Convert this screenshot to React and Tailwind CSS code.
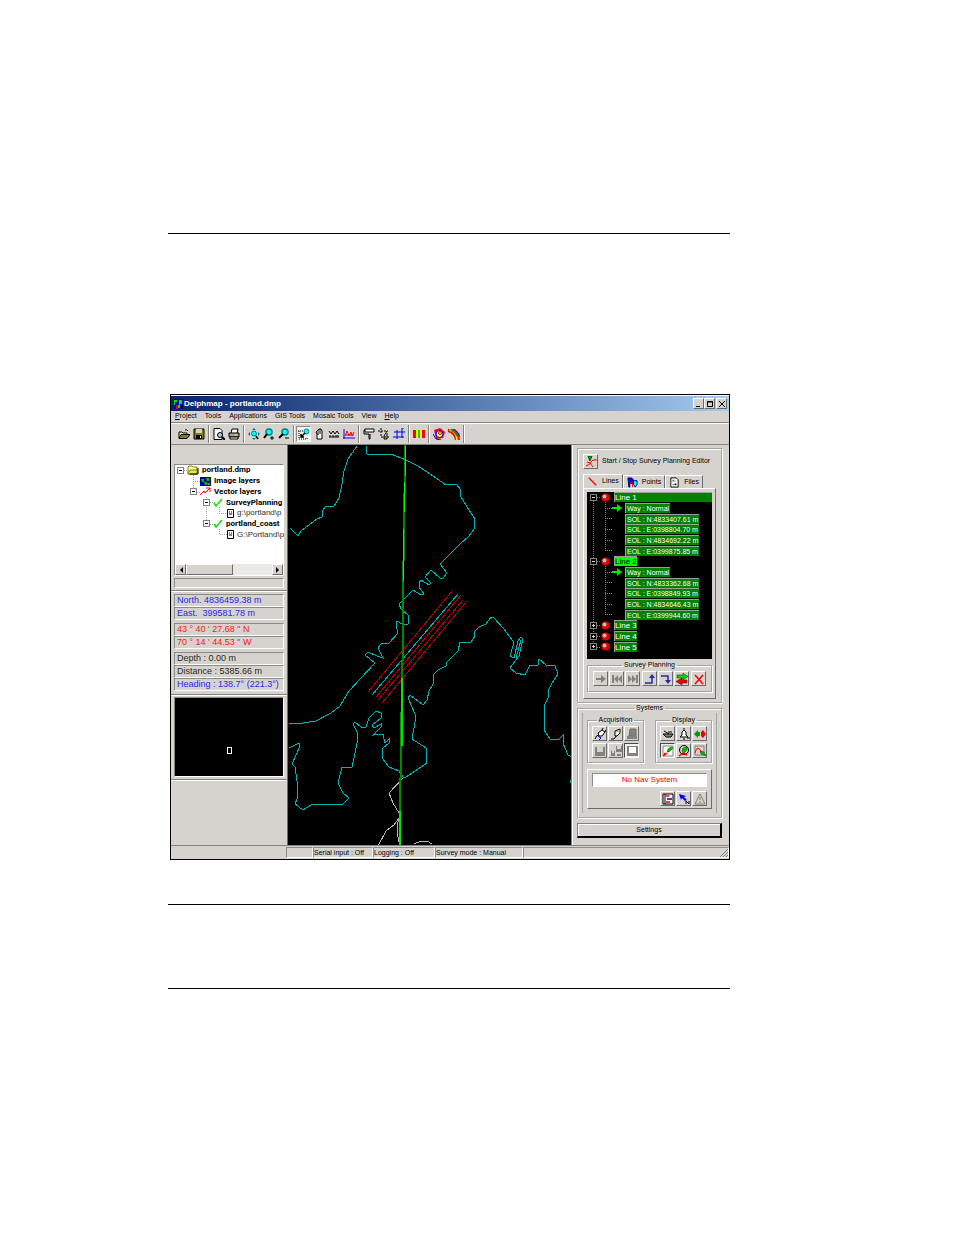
import React, { useState } from 'react';

const RAISED = "border border-t-white border-l-white border-r-[#6b6b6b] border-b-[#6b6b6b]";
const SUNKEN = "border border-t-[#8a8a86] border-l-[#8a8a86] border-r-white border-b-white";
const GROUP = "border border-[#a5a5a0] shadow-[1px_1px_0_#fff,inset_1px_1px_0_#fff]";

// Small bitmap-like icons, drawn on a 12 x 12 grid
const ICONS = {
  open: <><path d="M1 10V4h3l1 1h4v2" fill="#ffff80" stroke="#000" /><path d="M1 10.500l2-4h9l-3 4z" fill="#848200" stroke="#000" /><path d="M7 2q2-1 3 1" fill="none" stroke="#000" /></>,
  save: <><path d="M1 1h10v10H1z" fill="#848200" stroke="#000" /><path d="M3 1h6v4H3z" fill="#d6d3ce" /><path d="M3 7h6v4H3z" fill="#000" /><path d="M7 8h1v2H7z" fill="#fff" /></>,
  preview: <><path d="M1 0.500h6l2 2v9H1z" fill="#fff" stroke="#000" /><circle cx="7" cy="7" r="2.500" fill="#b5ced6" stroke="#000" /><path d="M9 9l3 3" stroke="#000" strokeWidth="2" /></>,
  print: <><path d="M3 5l1-4h6L9 5" fill="#fff" stroke="#000" /><path d="M1 5h10v4H1z" fill="#a5a5a0" stroke="#000" /><path d="M2 9h8v2H2z" fill="#fff" stroke="#000" /><path d="M7 7h2" stroke="#ff0" /></>,
  pan: <><path d="M6 0l2 2H4zM6 12l2-2H4zM0 6l2-2v4zM12 6l-2-2v4z" fill="#008284" /><circle cx="6" cy="5.500" r="2.500" fill="#0ff" stroke="#008284" /><path d="M8 8l2 3" stroke="#000" strokeWidth="1.500" /></>,
  zoomIn: <><circle cx="6" cy="4" r="3" fill="#0ff" stroke="#008284" strokeWidth="1.500" /><path d="M4 6l-3 4" stroke="#000" strokeWidth="2" /><path d="M7 10h4M9 8v4" stroke="#000" /></>,
  zoomOut: <><circle cx="7" cy="4" r="3" fill="#0ff" stroke="#008284" strokeWidth="1.500" /><path d="M5 6l-4 4" stroke="#000" strokeWidth="2" /><path d="M7 10h4" stroke="#000" /></>,
  zoomArea: <><path d="M0 3h6M1 3v8h8V9" stroke="#000" strokeDasharray="1 1" fill="none" /><circle cx="8.500" cy="3.500" r="2.500" fill="#0ff" stroke="#008284" /><path d="M7 5l-4 4M3 6v3h3" stroke="#000" strokeWidth="1.500" fill="none" /></>,
  hand: <><path d="M4 11V6L3 4l2-2 1-1h2l1 2v8z" fill="#fff" stroke="#000" /><path d="M5 2v5M7 1v5" stroke="#000" /></>,
  measure: <><path d="M1 3l2 3 2-3 2 3 2-3 2 3" fill="none" stroke="#000" /><path d="M1 9h10M2 7v2M5 7v2M8 7v2M10 7v2" stroke="#000" /></>,
  profile: <><path d="M1 1v10M0 10h12" stroke="#0000ff" /><path d="M2 8l2-5 2 5 2-4 1 4 2-4" fill="none" stroke="#ff0000" /><path d="M2 7h9" stroke="#ff0000" /></>,
  roller: <><path d="M2 1h9v3H2z" fill="#fff" stroke="#000" /><path d="M2 2H1v4h5v5h1V6" fill="none" stroke="#000" /></>,
  crop: <><path d="M3 0v9h9M0 3h10" fill="none" stroke="#000" strokeDasharray="2 1" /><path d="M9 3L6 8v3h3V5" fill="none" stroke="#000" /></>,
  grid: <><path d="M4 2v9M9 0v10M1 4h11M0 9h11" stroke="#0000ff" /><path d="M8 3l3-3" stroke="#008284" /></>,
  palette: <><path d="M0 2h3v8H0z" fill="#f00" /><path d="M3 2h2v8H3z" fill="#ff0" /><path d="M5 2h2v8H5z" fill="#0d0" /><path d="M7 2h2v8H7z" fill="#ff0" /><path d="M9 2h3v8H9z" fill="#f00" /></>,
  target: <><path d="M1 2l6-2 5 4-2 6-7 1z" fill="#f00" /><circle cx="6.500" cy="6" r="3.500" fill="#ff0" stroke="#00f" /><circle cx="7" cy="5" r="1.500" fill="#ff0" stroke="#f00" /><path d="M0 6l3 5 5 1" stroke="#00f" fill="none" /></>,
  track: <><path d="M0 1h6q5 3 6 11H7Q6 6 0 4z" fill="#f00" /><path d="M1 2q7 1 8 10" stroke="#ff0" strokeWidth="1.500" fill="none" /><path d="M3 2q4 1 6 6" stroke="#090" strokeWidth="2" fill="none" /><path d="M6 1q5 3 6 8" stroke="#00f" fill="none" /></>,
  planning: <><path d="M1 10q4-1 5-4t6-2" fill="none" stroke="#f00" /><path d="M2 6l3 1 3 4" fill="none" stroke="#f00" /><path d="M3 0h4L5 5z" fill="#0a0" stroke="#050" /></>,
  line: <path d="M2 2l8 8" stroke="#f00" strokeWidth="1.500" />,
  points: <><path d="M1 1h4l2 2v4H4V5H3v6H2z" fill="#00f" stroke="#006" /><path d="M3 5l3 1v5" stroke="#f00" fill="none" /><path d="M7 4h4v4l-2 3-2-3z" fill="#0ff" stroke="#006" /></>,
  files: <><path d="M2 1h6l2 2v8H2z" fill="#fff" stroke="#000" /><path d="M4 3h1v2H4zM6 4h1v1H6zM4 8h1v1H4zM6 7h2v2H6z" fill="#000" /></>,
  next: <path d="M1 5h5V2l5 4-5 4V7H1z" fill="#84827b" />,
  rewind: <path d="M1 2h2v8H1zM3 6l4-4v8zM7 6l4-4v8z" fill="#84827b" />,
  forward: <path d="M9 2h2v8H9zM1 2l4 4-4 4zM5 2l4 4-4 4z" fill="#84827b" />,
  up: <><path d="M1 10h7V4" fill="none" stroke="#2929a5" strokeWidth="1.500" /><path d="M5 5l3-4 3 4z" fill="#2929a5" /></>,
  down: <><path d="M1 3h7v5" fill="none" stroke="#2929a5" strokeWidth="1.500" /><path d="M5 7l3 4 3-4z" fill="#2929a5" /></>,
  swap: <><path d="M1 2h6V0l5 3.500L7 7V5H1z" fill="#0d0" stroke="#030" strokeWidth="0.500" /><path d="M11 7H6V5L0 8.500 6 12v-2h5z" fill="#f00" stroke="#300" strokeWidth="0.500" /></>,
  remove: <path d="M2 2l8 9M10 2l-8 9" stroke="#f00" strokeWidth="1.500" />,
  plug: <><path d="M1 11q1-4 4-4" fill="none" stroke="#000" /><path d="M4 5l4-3 3 2-3 4H5z" fill="#fff" stroke="#000" /><path d="M8 2l1-2M11 4l1-2" stroke="#000" /><path d="M4 8l3 2-2 2" fill="none" stroke="#00a" /></>,
  unplug: <><path d="M1 11h3l3-4" fill="none" stroke="#000" /><path d="M5 3l5-2v4L7 8H5z" fill="#fff" stroke="#000" /><path d="M6 4l3-1" stroke="#aa0" /></>,
  station: <><path d="M4 1h6v7H3z" fill="#84827b" stroke="#6b6b66" /><path d="M1 8h10v3H1z" fill="#84827b" /></>,
  disk: <><path d="M1 2h10v9H1z" fill="#84827b" /><path d="M3 2h6v5H3z" fill="#d6d3ce" /></>,
  disks: <><path d="M6 1h6v6H6zM1 6h4v5H1z" fill="#84827b" /><path d="M7 1h4v3H7zM2 6h2v2H2z" fill="#d6d3ce" /><path d="M7 9h4v2H7z" fill="#84827b" /></>,
  diskOn: <><path d="M1 1h11v10H1z" fill="#84827b" /><path d="M3 2h7v6H3z" fill="#fff" /></>,
  boat: <><path d="M1 6h10l-2 3H4z" fill="#84827b" stroke="#000" /><path d="M2 3l5 3M6 4h4" stroke="#000" /></>,
  bell: <><path d="M2 9h8L8 7V4L6 2 4 4v3z" fill="#fff" stroke="#000" /><path d="M6 0v2M5 11h2M9 10h3" stroke="#000" /></>,
  sides: <><path d="M0 6l4-4v2h2v4H4v2z" fill="#090" /><path d="M12 6L9 2 7 4v4l2 2z" fill="#e00" /></>,
  mapBoat: <><path d="M1 1h10v10H1z" fill="#fff" stroke="#84827b" /><path d="M1 11l4-3M2 8l2 2" stroke="#f00" strokeWidth="1.500" /><path d="M5 7l1-3 3-2 2 1-4 4z" fill="#0b0" stroke="#040" strokeWidth="0.500" /></>,
  follow: <><circle cx="6" cy="5" r="4.500" fill="none" stroke="#000" /><path d="M4 6l1-3 4-1v3L6 8z" fill="#0b0" stroke="#040" strokeWidth="0.500" /><path d="M1 11l4-3 4 2" fill="none" stroke="#f00" strokeWidth="1.500" /></>,
  route: <><path d="M1 1h9v9H1z" fill="none" stroke="#84827b" /><path d="M1 8q2-7 4-4l3 3" fill="none" stroke="#f00" /><path d="M6 6l4 1 2 4-5-2z" fill="#0b0" stroke="#040" strokeWidth="0.500" /></>,
  report: <><path d="M1 1h10v10H1z" fill="#fff" stroke="#000" /><path d="M3 1v10" stroke="#000" /><path d="M4 3h3M4 9h4" stroke="#f00" strokeWidth="1.500" /><path d="M5 6h5" stroke="#00a" strokeWidth="1.500" /></>,
  pointer: <><path d="M1 1l7 2-2 1 3 3-2 1-3-3-1 2z" fill="#00f" /><path d="M8 11V8l3 3V8" fill="none" stroke="#000" /></>,
  warning: <><path d="M6 1l5 10H1z" fill="#d6d3ce" stroke="#84827b" /><path d="M6 4v3M6 8v2" stroke="#84827b" /></>,
};

function Icon({ name, className = "size-3" }) {
  return (
    <svg viewBox="0 0 12 12" className={`shrink-0 ${className}`} fill="none" aria-hidden="true">
      {ICONS[name]}
    </svg>
  );
}

const TOOLBAR = [
  [["open", "Open"], ["save", "Save"]],
  [["preview", "Print preview"], ["print", "Print"]],
  [["pan", "Zoom extents"], ["zoomIn", "Zoom in"], ["zoomOut", "Zoom out"]],
  [["zoomArea", "Zoom area"], ["hand", "Pan"], ["measure", "Measure"], ["profile", "Profile"]],
  [["roller", "Paint"], ["crop", "Crop"], ["grid", "Grid"]],
  [["palette", "Palette"]],
  [["target", "Target"], ["track", "Track"]],
];

const MENUS = ["Project", "Tools", "Applications", "GIS Tools", "Mosaic Tools", "View", "Help"];
const UNDERLINED = ["Project", "Help"];

const PLAN = [
  { type: "line", label: "Line 1", open: true, row: "grow bg-[#008200] text-white" },
  { type: "way", label: "Way : Normal" },
  { type: "pos", label: "SOL : N:4833407.61 m" },
  { type: "pos", label: "SOL : E:0398804.70 m" },
  { type: "pos", label: "EOL : N:4834692.22 m" },
  { type: "pos", label: "EOL : E:0399875.85 m" },
  { type: "line", label: "Line 2", open: true, row: "bg-[#00ff00] text-black" },
  { type: "way", label: "Way : Normal" },
  { type: "pos", label: "SOL : N:4833362.68 m" },
  { type: "pos", label: "SOL : E:0398849.93 m" },
  { type: "pos", label: "EOL : N:4834646.43 m" },
  { type: "pos", label: "EOL : E:0399944.60 m" },
  { type: "line", label: "Line 3", row: "bg-[#008200] text-white" },
  { type: "line", label: "Line 4", row: "bg-[#008200] text-white" },
  { type: "line", label: "Line 5", row: "bg-[#008200] text-white" },
];

const COAST = [
  "M68 0L59 13L55 25L53 38L50 52L45 60H37L34 64L33 71L28 73L20 79L12 85L9 90L1 82",
  "M77 0L78 8H102L117 14L129 20L147 32L157 39L167 38L172 44L171 49L178 61L186 73L185 83L180 90L170 99L151 118L158 127L154 132H151L142 124L136 131L142 137L140 139L132 134L130 137V141L135 148L132 149L124 144L110 158L112 163L120 170L119 178H113L108 175L107 178L109 187L100 197L92 198L89 202L94 212L88 210L79 206L76 209L86 217L72 232L60 245L51 260L42 267L27 275L14 277L0 278",
  "M0 302L10 297L11 300L3 318L6 321L8 335V353L6 358L14 364L22 359L34 358H54L60 352L54 347L49 337L53 321H63L66 307L69 292L68 286L64 278L66 276L72 281H77L80 272L87 265L92 267V272L83 279L85 282L92 278V281L84 289L94 288L96 297L100 293V297L93 303V312L100 321L110 325L114 331H117L138 317L137 302L123 293L126 276V268L119 252L121 249L134 259L138 254L140 245L144 238L145 228L149 224L157 220V217L169 205L171 196H182L186 190L185 186L190 181L197 178L202 171L205 172L214 182L224 195V200L221 210L225 212L229 195L232 191L234 193L230 210L221 222L227 227L236 229L241 219H249L250 213L257 219L266 220L269 228L263 237L260 243L259 252L255 260V284L261 293L269 294L274 289V297L279 309L283 311",
  "M227 212L232 194M283 333L281 336L283 338",
];

function Win({ label, children }) {
  return (
    <button aria-label={label} className={`flex h-[11px] w-[11px] items-center justify-center bg-[#d6d3ce] ${RAISED}`}>
      <svg viewBox="0 0 8 8" className="size-2 shrink-0" fill="none" stroke="#000">{children}</svg>
    </button>
  );
}

function ToolButton({ name, label, pressed }) {
  return (
    <button
      aria-label={label}
      className={`flex size-[15px] shrink-0 items-center justify-center ${pressed ? "border border-t-[#4a4a4a] border-r-white border-b-white border-l-[#4a4a4a] bg-[#efefec]" : `bg-[#d6d3ce] ${RAISED}`}`}
    >
      <Icon name={name} />
    </button>
  );
}

function Expander({ open, dark }) {
  return (
    <svg viewBox="0 0 7 7" className="size-[7px] shrink-0" fill={dark ? "#000" : "#fff"} stroke="#84827b" shapeRendering="crispEdges">
      <path d="M0.500 0.500h6v6h-6z" />
      <path d={open ? "M2 3.500h3" : "M2 3.500h3M3.500 2v3"} stroke={dark ? "#d6d3ce" : "#000"} />
    </svg>
  );
}

function Check() {
  return (
    <svg viewBox="0 0 10 9" className="mx-[3px] h-[9px] w-[10px] shrink-0" fill="none" stroke="#00e700" strokeWidth="1.500">
      <path d="M1 5l2 3 6-7" />
    </svg>
  );
}

function LayerFile() {
  return (
    <svg viewBox="0 0 7 9" className="mr-[3px] h-[9px] w-[7px] shrink-0" fill="#fff" stroke="#000">
      <path d="M0.500 0.500h6v8h-6zM2 3h1M4 3h1M2 5h3" />
    </svg>
  );
}

function LayerTree() {
  return (
    <div className="relative h-[75px] font-[Roboto,'Liberation_Sans',sans-serif] text-[8px] leading-[10px] whitespace-nowrap text-black">
      <svg viewBox="0 0 108 75" className="absolute top-0 left-0 h-[75px] w-[108px]" fill="none" stroke="#a5a5a0" strokeDasharray="1 1" shapeRendering="crispEdges">
        <path d="M5 5.500H14M18.500 10V27M18 16.500H26M18 27.500H26M31.500 32V59M31 37.500H40M31 59.500H40M44.500 42V48.500H52M44.500 64V69.500H52" />
      </svg>
      <ul className="relative flex h-full flex-col">
        <li className="flex min-h-0 flex-1 items-center pl-[2px] font-bold">
          <Expander open />
          <svg viewBox="0 0 12 10" className="mx-[3px] h-[10px] w-3 shrink-0"><path d="M1 9V2l1-1h3l1 1h4v7z" fill="#ffff9c" stroke="#848200" /><path d="M3 5h8l-2 4H1z" fill="#e7e763" stroke="#848200" /><path d="M11 3v6H3" fill="none" stroke="#000" /></svg>
          portland.dmp
        </li>
        <li className="flex min-h-0 flex-1 items-center pl-[25px] font-bold">
          <svg viewBox="0 0 11 9" className="mr-[3px] h-[9px] w-[11px] shrink-0"><path d="M0 0h11v9H0z" fill="#0000a5" /><path d="M1 2h3v3H2zM6 1h3v3H7zM4 5h3v3H5zM8 6h2v2H8z" fill="#00c600" /></svg>
          Image layers
        </li>
        <li className="flex min-h-0 flex-1 items-center pl-[15px] font-bold">
          <Expander open />
          <svg viewBox="0 0 11 9" className="mx-[3px] h-[9px] w-[11px] shrink-0" fill="none" stroke="#f00"><path d="M0 8l4-4 1 2 5-5M6 1h4v4" /></svg>
          Vector layers
        </li>
        <li className="flex min-h-0 flex-1 items-center pl-[28px] font-bold">
          <Expander open />
          <Check />
          SurveyPlanning
        </li>
        <li className="flex min-h-0 flex-1 items-center pl-[52px] font-['Liberation_Sans',Arial,sans-serif] text-[#313131]">
          <LayerFile />
          g:\portland\p
        </li>
        <li className="flex min-h-0 flex-1 items-center pl-[28px] font-bold">
          <Expander open />
          <Check />
          portland_coast
        </li>
        <li className="flex min-h-0 flex-1 items-center pl-[52px] font-['Liberation_Sans',Arial,sans-serif] text-[#313131]">
          <LayerFile />
          G:\Portland\p
        </li>
      </ul>
    </div>
  );
}

function Readout({ color, children }) {
  return <p className={`h-[13px] pl-[2px] text-[9px] leading-[11px] whitespace-nowrap ${SUNKEN} ${color}`}>{children}</p>;
}

function LeftPanel() {
  return (
    <aside className="flex w-[116px] shrink-0 flex-col">
      <div className="px-[3px] pt-[19px]">
        <div className={`flex h-[112px] flex-col justify-between bg-white ${SUNKEN}`}>
          <LayerTree />
          <div className="flex h-[11px] bg-[#ebe9e6]">
            <button aria-label="Scroll left" className={`flex w-[11px] items-center justify-center bg-[#d6d3ce] ${RAISED}`}>
              <svg viewBox="0 0 4 6" className="h-[6px] w-1"><path d="M4 0v6L1 3z" /></svg>
            </button>
            <div className={`w-[47px] bg-[#d6d3ce] ${RAISED}`} />
            <button aria-label="Scroll right" className={`ml-auto flex w-[11px] items-center justify-center bg-[#d6d3ce] ${RAISED}`}>
              <svg viewBox="0 0 4 6" className="h-[6px] w-1"><path d="M0 0v6l3-3z" /></svg>
            </button>
          </div>
        </div>
        <div className={`mt-[2px] h-[10px] ${SUNKEN}`} />
      </div>
      <div className="mt-[2px] flex flex-col border-t border-[#84827b] px-[3px] pb-[3px] shadow-[inset_0_1px_0_#fff]">
        <div className="flex flex-col pt-[3px]">
          <Readout color="text-[#2929e7]">North. 4836459.38 m</Readout>
          <Readout color="text-[#2929e7]">East. &nbsp;399581.78 m</Readout>
        </div>
        <div className="flex flex-col pt-[3px]">
          <Readout color="text-[#f71818]">43 ° 40 ' 27.68 " N</Readout>
          <Readout color="text-[#f71818]">70 ° 14 ' 44.53 " W</Readout>
        </div>
        <div className="flex flex-col pt-[3px]">
          <Readout color="text-[#292929]">Depth : 0.00 m</Readout>
          <Readout color="text-[#292929]">Distance : 5385.66 m</Readout>
          <Readout color="text-[#2929e7]">Heading : 138.7° (221.3°)</Readout>
        </div>
      </div>
      <div className="border-y border-[#84827b] px-[3px] py-[2px] shadow-[0_1px_0_#fff,inset_0_1px_0_#fff]">
        <svg viewBox="0 0 108 78" className={`h-20 w-full bg-black ${SUNKEN}`} fill="none" stroke="#fff" shapeRendering="crispEdges">
          <path d="M52.500 49.500h4v6h-4z" />
        </svg>
      </div>
    </aside>
  );
}

function SurveyMap() {
  return (
    <svg viewBox="0 0 283 400" preserveAspectRatio="xMidYMid slice" className="h-full w-full" fill="none" shapeRendering="crispEdges" role="img" aria-label="Survey map">
      <g transform="translate(1 1)">
        <g stroke="#00b5b5">
          {COAST.map((d) => <path key={d} d={d} />)}
        </g>
        <path d="M114 332L100 347L104 357L110 367V372L105 379L97 385L89 400M110 372L108 380V387L111 400M125 398L132 395H138L143 398" stroke="#b5b5b5" />
        <path d="M164 144L79 246M172 149L87 251M174 154L89 254M178 155L93 257" stroke="#b50000" />
        <path d="M169 148L83 249" stroke="#00b5b5" />
      </g>
      <path d="M117 0L116 100L115 133V200L114 233L113 302L112 366V400" stroke="#008a00" strokeWidth="2" />
      <path d="M117.500 1V31M116.500 37V67M115.500 84V136" stroke="#00ff00" />
      <path d="M114 233V301M112 366V400" stroke="#00e700" strokeWidth="2" />
    </svg>
  );
}

function PlanTree() {
  return (
    <div className="relative bg-black pb-[7px] text-[7px] whitespace-nowrap">
      <svg viewBox="0 0 125 160" className="absolute top-0 left-0 h-40 w-[125px]" fill="none" stroke="#84827b" strokeDasharray="1 1" shapeRendering="crispEdges">
        <path d="M6.500 9V155M10 5.500H14M10 69.500H14M10 133.500H14M10 144.500H14M10 155.500H14M18.500 10V58.500M18 16.500H26M18 26.500H26M18 37.500H26M18 48.500H26M18 58.500H26M18.500 74V122.500M18 80.500H26M18 90.500H26M18 101.500H26M18 112.500H26M18 122.500H26" />
      </svg>
      <ul className="relative flex h-40 flex-col">
        {PLAN.map((item, i) => (
          <li key={i} className="flex min-h-0 flex-1 items-center leading-[9px]">
            {item.type === "line" ? (
              <>
                <span className="ml-[3px] flex"><Expander open={item.open} dark /></span>
                <svg viewBox="0 0 9 9" className="mx-1 size-[9px] shrink-0"><circle cx="4.500" cy="4.500" r="4" fill="#e70000" /><circle cx="3.500" cy="3.500" r="2" fill="#bdbdbd" /></svg>
                <span className={`border-t border-l border-[#9c9c9c] text-[8px] ${item.row}`}>{item.label}</span>
              </>
            ) : (
              <>
                <span className="flex w-[38px] shrink-0 justify-end pr-[3px]">
                  {item.type === "way" && <svg viewBox="0 0 10 8" className="h-2 w-[10px]"><path d="M0 3h5V0l5 4-5 4V5H0z" fill="#00e700" /></svg>}
                </span>
                <span className="border-t border-l border-[#9c9c9c] bg-[#008200] px-px text-white">{item.label}</span>
              </>
            )}
          </li>
        ))}
      </ul>
    </div>
  );
}

function Legend({ children }) {
  return <legend className="mx-auto px-[2px] text-[7px] leading-[10px]">{children}</legend>;
}

function RightPanel() {
  const [tab, setTab] = useState("Lines");

  return (
    <aside className="flex w-[158px] shrink-0 flex-col border-l border-[#84827b] pr-[7px] pl-[5px] shadow-[inset_1px_0_0_#fff]">
      <section className={`mt-[3px] flex h-[255px] flex-col px-[5px] pt-[5px] pb-[3px] ${GROUP}`}>
        <div className="flex items-center gap-[4px] text-[7px] whitespace-nowrap">
          <ToolButton name="planning" label="Survey planning editor" />
          <span>Start / Stop Survey Planning Editor</span>
        </div>
        <div className="mt-[5px] flex items-end text-[7px]" role="tablist">
          {[["Lines", "line"], ["Points", "points"], ["Files", "files"]].map(([name, icon]) => (
            <button
              key={name}
              role="tab"
              aria-selected={tab === name}
              onClick={() => setTab(name)}
              className={`flex items-center gap-[4px] border-t border-r border-l border-t-white border-r-[#6b6b6b] border-l-white px-[3px] ${tab === name ? "h-[14px]" : "h-[13px]"}`}
            >
              <Icon name={icon} className="size-[11px]" />
              {name}
            </button>
          ))}
        </div>
        <div className={`flex flex-1 flex-col px-[3px] pt-[3px] ${RAISED}`}>
          <PlanTree />
          <fieldset className={`mt-px h-[32px] px-[5px] ${GROUP}`}>
            <Legend>Survey Planning</Legend>
            <div className="flex justify-between pt-px">
              <div className="flex gap-px">
                <ToolButton name="next" label="Next" />
                <ToolButton name="rewind" label="First" />
                <ToolButton name="forward" label="Last" />
              </div>
              <div className="flex gap-px">
                <ToolButton name="up" label="Line up" />
                <ToolButton name="down" label="Line down" />
                <ToolButton name="swap" label="Swap direction" />
              </div>
              <ToolButton name="remove" label="Delete" />
            </div>
          </fieldset>
        </div>
      </section>

      <fieldset className={`px-1 pb-1 ${GROUP}`}>
        <Legend>Systems</Legend>
        <div className="flex flex-col border-x border-[#a5a5a0] px-1 pt-[2px] pb-1">
          <div className="flex justify-between">
            <fieldset className={`px-1 pb-1 ${GROUP}`}>
              <Legend>Acquisition</Legend>
              <div className="grid grid-cols-3 gap-x-px gap-y-[2px] pt-px">
                <ToolButton name="plug" label="Connect" />
                <ToolButton name="unplug" label="Disconnect" />
                <ToolButton name="station" label="Station" />
                <ToolButton name="disk" label="Record" />
                <ToolButton name="disks" label="Split record" />
                <ToolButton name="diskOn" label="Stop record" pressed />
              </div>
            </fieldset>
            <fieldset className={`px-1 pb-1 ${GROUP}`}>
              <Legend>Display</Legend>
              <div className="grid grid-cols-3 gap-x-px gap-y-[2px] pt-px">
                <ToolButton name="boat" label="Vessel" />
                <ToolButton name="bell" label="Alarm" />
                <ToolButton name="sides" label="Port and starboard" />
                <ToolButton name="mapBoat" label="Show vessel" pressed />
                <ToolButton name="follow" label="Follow vessel" />
                <ToolButton name="route" label="Route" />
              </div>
            </fieldset>
          </div>
          <div className={`mt-[6px] flex flex-col px-1 pt-[3px] pb-[2px] ${RAISED}`}>
            <p className={`h-[14px] bg-white text-center text-[8px] leading-3 text-[#e70000] ${SUNKEN}`}>No Nav System</p>
            <div className="mt-1 flex justify-end gap-px">
              <ToolButton name="report" label="Report" />
              <ToolButton name="pointer" label="Navigation pointer" />
              <ToolButton name="warning" label="Warnings" />
            </div>
          </div>
        </div>
      </fieldset>

      <button className="mt-[5px] h-[15px] border border-t-[#84827b] border-r-2 border-b-2 border-l-[#84827b] border-r-black border-b-black bg-[#d6d3ce] text-[7px] leading-3 shadow-[inset_1px_1px_0_#fff]">
        Settings
      </button>
    </aside>
  );
}

export default function App() {
  return (
    <div className="min-h-screen bg-white pt-[233px] pr-[224px] pb-[246px] pl-[168px] font-['Liberation_Sans',Arial,sans-serif] text-black">
      <hr className="border-black" />

      <main className="mt-[160px] ml-[2px] border border-black bg-[#d6d3ce]">
        <header className="flex h-4 items-center justify-between border-t border-white bg-linear-to-r from-[#0a246a] to-[#a6caf0] pr-[2px] pl-[3px]">
          <h1 className="flex items-center gap-px text-[8px] font-bold text-white">
            <svg viewBox="0 0 9 10" className="h-[10px] w-[9px]"><path d="M0 0h9v10H0z" fill="#0000c6" /><path d="M0 1h3v2H1v3H0zM5 1h3v4H6v4H4V6h1z" fill="#00e700" /><path d="M2 6h2v4H2z" fill="#e70000" /><path d="M7 6h2v4H7z" fill="#000" /></svg>
            Delphmap - portland.dmp
          </h1>
          <div className="flex">
            <Win label="Minimize"><path d="M1 6.500h4" /></Win>
            <Win label="Maximize"><path d="M1.500 1.500h5v5h-5zM1 2h6" /></Win>
            <span className="w-px" />
            <Win label="Close"><path d="M1 1l6 6M7 1L1 7" /></Win>
          </div>
        </header>

        <nav className="flex h-3 items-center gap-[8px] border-b border-[#84827b] pl-1 text-[7px]">
          {MENUS.map((name) => (
            <button key={name}>
              {UNDERLINED.includes(name) ? <><u>{name[0]}</u>{name.slice(1)}</> : name}
            </button>
          ))}
        </nav>

        <div className="flex h-[22px] items-center border-t border-b border-t-white border-b-[#84827b] pl-[5px]">
          {TOOLBAR.map((group, i) => (
            <div key={i} className="flex items-center">
              {group.map(([name, label]) => (
                <button
                  key={name}
                  aria-label={label}
                  className={`flex h-4 w-[15px] items-center justify-center ${name === "zoomArea" ? `bg-[#efefec] ${SUNKEN}` : ""}`}
                >
                  <Icon name={name} />
                </button>
              ))}
              <span className="mx-[2px] h-[18px] w-px bg-[#84827b] shadow-[1px_0_0_#fff]" />
            </div>
          ))}
        </div>

        <div className="flex h-[400px]">
          <LeftPanel />
          <div className="min-w-0 flex-1 border-l border-[#6b6b6b] bg-black">
            <SurveyMap />
          </div>
          <RightPanel />
        </div>

        <footer className="flex h-[14px] items-center border-t border-[#84827b] pl-[115px] text-[7px] leading-[9px] whitespace-nowrap">
          <span className={`h-[11px] w-[27px] ${SUNKEN}`} />
          <span className={`h-[11px] w-[60px] ${SUNKEN}`}>Serial input : Off</span>
          <span className={`h-[11px] w-[62px] ${SUNKEN}`}>Logging : Off</span>
          <span className={`h-[11px] w-[88px] ${SUNKEN}`}>Survey mode : Manual</span>
          <span className={`flex h-[11px] flex-1 justify-end ${SUNKEN}`}>
            <svg viewBox="0 0 9 9" className="size-[9px]" stroke="#84827b"><path d="M1 9l8-8M4 9l5-5M7 9l2-2" /></svg>
          </span>
        </footer>
      </main>

      <hr className="mt-[44px] border-black" />
      <hr className="mt-[83px] border-black" />
    </div>
  );
}
